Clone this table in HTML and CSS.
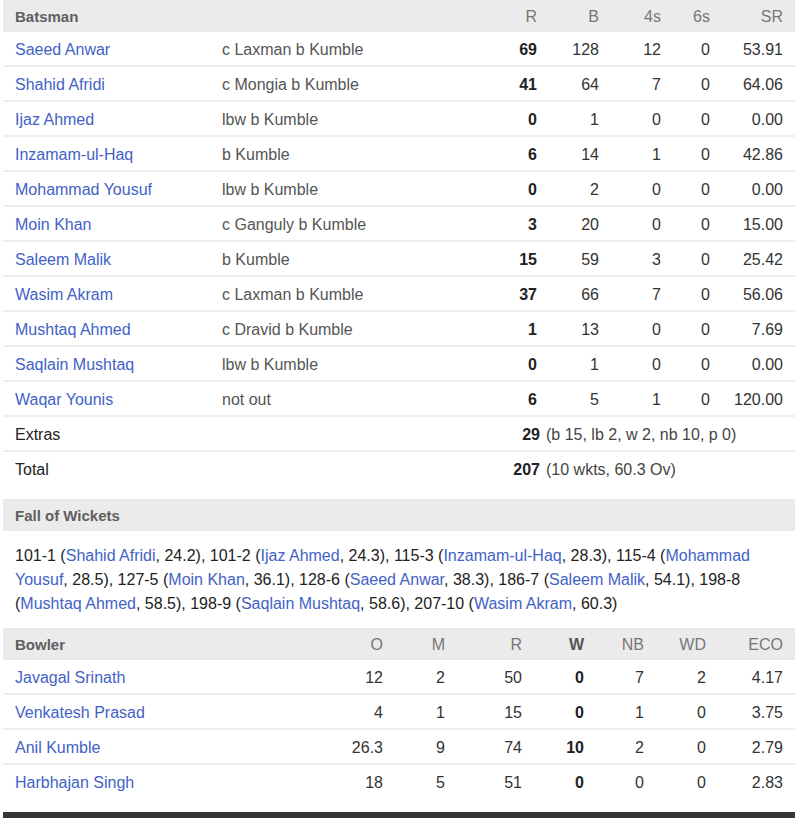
FILE: index.html
```html
<!DOCTYPE html>
<html>
<head>
<meta charset="utf-8">
<link rel="stylesheet" href="styles.css">
</head>
<body>
<div class="card">
  <table class="sc bat">
    <colgroup>
      <col style="width:207px"><col style="width:279px"><col style="width:60px"><col style="width:62px"><col style="width:62px"><col style="width:49px"><col style="width:73px">
    </colgroup>
    <thead>
      <tr><th class="l">Batsman</th><th></th><th>R</th><th>B</th><th>4s</th><th>6s</th><th>SR</th></tr>
    </thead>
    <tbody>
      <tr><td class="name"><a>Saeed Anwar</a></td><td class="how">c Laxman b Kumble</td><td class="b">69</td><td>128</td><td>12</td><td>0</td><td>53.91</td></tr>
      <tr><td class="name"><a>Shahid Afridi</a></td><td class="how">c Mongia b Kumble</td><td class="b">41</td><td>64</td><td>7</td><td>0</td><td>64.06</td></tr>
      <tr><td class="name"><a>Ijaz Ahmed</a></td><td class="how">lbw b Kumble</td><td class="b">0</td><td>1</td><td>0</td><td>0</td><td>0.00</td></tr>
      <tr><td class="name"><a>Inzamam-ul-Haq</a></td><td class="how">b Kumble</td><td class="b">6</td><td>14</td><td>1</td><td>0</td><td>42.86</td></tr>
      <tr><td class="name"><a>Mohammad Yousuf</a></td><td class="how">lbw b Kumble</td><td class="b">0</td><td>2</td><td>0</td><td>0</td><td>0.00</td></tr>
      <tr><td class="name"><a>Moin Khan</a></td><td class="how">c Ganguly b Kumble</td><td class="b">3</td><td>20</td><td>0</td><td>0</td><td>15.00</td></tr>
      <tr><td class="name"><a>Saleem Malik</a></td><td class="how">b Kumble</td><td class="b">15</td><td>59</td><td>3</td><td>0</td><td>25.42</td></tr>
      <tr><td class="name"><a>Wasim Akram</a></td><td class="how">c Laxman b Kumble</td><td class="b">37</td><td>66</td><td>7</td><td>0</td><td>56.06</td></tr>
      <tr><td class="name"><a>Mushtaq Ahmed</a></td><td class="how">c Dravid b Kumble</td><td class="b">1</td><td>13</td><td>0</td><td>0</td><td>7.69</td></tr>
      <tr><td class="name"><a>Saqlain Mushtaq</a></td><td class="how">lbw b Kumble</td><td class="b">0</td><td>1</td><td>0</td><td>0</td><td>0.00</td></tr>
      <tr><td class="name"><a>Waqar Younis</a></td><td class="how">not out</td><td class="b">6</td><td>5</td><td>1</td><td>0</td><td>120.00</td></tr>
      <tr><td class="name plain" colspan="2">Extras</td><td class="sum" colspan="5"><span class="tot">29</span><span class="det">(b 15, lb 2, w 2, nb 10, p 0)</span></td></tr>
      <tr class="last"><td class="name plain" colspan="2">Total</td><td class="sum" colspan="5"><span class="tot">207</span><span class="det">(10 wkts, 60.3 Ov)</span></td></tr>
    </tbody>
  </table>

  <div class="sec-head">Fall of Wickets</div>
  <p class="fow">101-1 (<a>Shahid Afridi</a>, 24.2), 101-2 (<a>Ijaz Ahmed</a>, 24.3), 115-3 (<a>Inzamam-ul-Haq</a>, 28.3), 115-4 (<a>Mohammad Yousuf</a>, 28.5), 127-5 (<a>Moin Khan</a>, 36.1), 128-6 (<a>Saeed Anwar</a>, 38.3), 186-7 (<a>Saleem Malik</a>, 54.1), 198-8 (<a>Mushtaq Ahmed</a>, 58.5), 198-9 (<a>Saqlain Mushtaq</a>, 58.6), 207-10 (<a>Wasim Akram</a>, 60.3)</p>

  <table class="sc bowl">
    <colgroup>
      <col style="width:332px"><col style="width:60px"><col style="width:62px"><col style="width:77px"><col style="width:62px"><col style="width:60px"><col style="width:62px"><col style="width:77px">
    </colgroup>
    <thead>
      <tr><th class="l">Bowler</th><th>O</th><th>M</th><th>R</th><th class="w">W</th><th>NB</th><th>WD</th><th>ECO</th></tr>
    </thead>
    <tbody>
      <tr><td class="name"><a>Javagal Srinath</a></td><td>12</td><td>2</td><td>50</td><td class="b">0</td><td>7</td><td>2</td><td>4.17</td></tr>
      <tr><td class="name"><a>Venkatesh Prasad</a></td><td>4</td><td>1</td><td>15</td><td class="b">0</td><td>1</td><td>0</td><td>3.75</td></tr>
      <tr><td class="name"><a>Anil Kumble</a></td><td>26.3</td><td>9</td><td>74</td><td class="b">10</td><td>2</td><td>0</td><td>2.79</td></tr>
      <tr class="last"><td class="name"><a>Harbhajan Singh</a></td><td>18</td><td>5</td><td>51</td><td class="b">0</td><td>0</td><td>0</td><td>2.83</td></tr>
    </tbody>
  </table>

  <div class="footer-bar"></div>
</div>
</body>
</html>
```

FILE: styles.css
```css
html, body {
  margin: 0;
  padding: 0;
  background: #ffffff;
}

body {
  font-family: "Liberation Sans", Arial, sans-serif;
  font-size: 16px;
  color: #222222;
}

.card {
  width: 792px;
  margin: 0 5px 0 3px;
}

a {
  color: #4262c6;
  text-decoration: none;
}

.sc {
  width: 792px;
  table-layout: fixed;
  border-collapse: separate;
  border-spacing: 0;
}

.sc th {
  background: #ebebeb;
  height: 31px;
  line-height: 31px;
  padding: 1px 12px 0;
  font-weight: normal;
  color: #777777;
  text-align: right;
  font-size: 16px;
  white-space: nowrap;
}

.sc th.l {
  text-align: left;
  font-weight: bold;
  font-size: 15px;
  color: #5f5f5f;
}

.sc th.w {
  font-weight: bold;
  color: #555555;
}

.sc td {
  height: 31px;
  line-height: 31px;
  padding: 2px 12px 0;
  text-align: right;
  color: #333333;
  border-bottom: 2px solid #eeeeee;
  white-space: nowrap;
}

.sc tr.last td {
  border-bottom: 2px solid transparent;
}

.sc td.name {
  text-align: left;
}

.sc td.plain {
  color: #222222;
}

.sc td.how {
  text-align: left;
  color: #555555;
}

.sc td.b {
  font-weight: bold;
  color: #222222;
}

.sc td.sum {
  text-align: left;
  color: #444444;
}

.tot {
  display: inline-block;
  width: 39px;
  text-align: right;
  font-weight: bold;
  color: #222222;
  margin-right: 6px;
}

.sec-head {
  margin-top: 12px;
  background: #ebebeb;
  height: 31px;
  line-height: 31px;
  padding: 1px 12px 0;
  font-weight: bold;
  font-size: 15px;
  color: #5f5f5f;
}

.fow {
  margin: 0;
  padding: 13px 12px 12px;
  line-height: 24px;
  color: #222222;
}

.footer-bar {
  margin-top: 12px;
  height: 40px;
  background: #363636;
}
```
